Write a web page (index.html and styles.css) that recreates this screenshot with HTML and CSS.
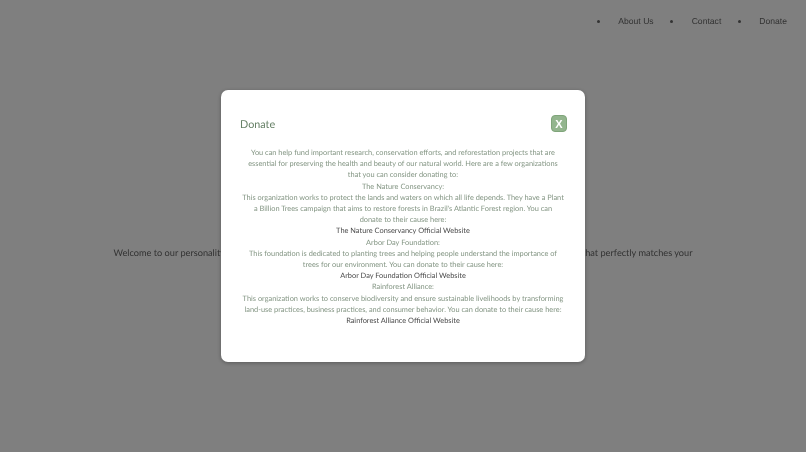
FILE: index.html
```html
<!DOCTYPE html>
<html lang="en">
<head>
  <meta charset="UTF-8" />
  <meta name="viewport" content="width=device-width, initial-scale=1.0"/>
  <title>Donate</title>
  <link rel="stylesheet" href="styles.css">
</head>
<body>
  <nav class="nav">
    <ul class="nav-list">
      <li><a href="#">About Us</a></li>
      <li><a href="#">Contact</a></li>
      <li><a href="#">Donate</a></li>
    </ul>
  </nav>

  <main class="intro">
    <p>Welcome to our personality quiz! Answer a few simple questions about yourself and we will find the one kind of tree that perfectly matches your personality.</p>
  </main>

  <!-- Donate modal -->
  <div class="overlay">
    <div class="modal">
      <div class="modal-head">
        <h2>Donate</h2>
        <button class="close-btn">X</button>
      </div>
      <div class="modal-body">
        <p>You can help fund important research, conservation efforts, and reforestation projects that are essential for preserving the health and beauty of our natural world. Here are a few organizations that you can consider donating to:</p>
        <p>The Nature Conservancy:</p>
        <p>This organization works to protect the lands and waters on which all life depends. They have a Plant a Billion Trees campaign that aims to restore forests in Brazil's Atlantic Forest region. You can donate to their cause here:</p>
        <p><a href="#">The Nature Conservancy Official Website</a></p>
        <p>Arbor Day Foundation:</p>
        <p>This foundation is dedicated to planting trees and helping people understand the importance of trees for our environment. You can donate to their cause here:</p>
        <p><a href="#">Arbor Day Foundation Official Website</a></p>
        <p>Rainforest Alliance:</p>
        <p>This organization works to conserve biodiversity and ensure sustainable livelihoods by transforming land-use practices, business practices, and consumer behavior. You can donate to their cause here:</p>
        <p><a href="#">Rainforest Alliance Official Website</a></p>
      </div>
    </div>
  </div>
</body>
</html>
```

FILE: styles.css
```css
body {
  margin: 0;
  height: 452px;
  overflow: hidden;
  background-color: #fff;
  color: #666;
  font-family: "Lato", sans-serif;
  text-rendering: geometricPrecision;
  display: flex;
  flex-direction: column;
  filter: blur(0.3px);
}

.nav {
  display: flex;
  justify-content: flex-end;
  padding: 15px 19px 0 0;
}

.nav-list {
  display: flex;
  gap: 16.5px;
  margin: 0;
  padding: 0;
  list-style: none;
  font-family: "Liberation Sans", sans-serif;
  font-size: 8.6px;
  line-height: 12px;
}

.nav-list li {
  display: flex;
  align-items: center;
}

.nav-list li::before {
  content: "";
  width: 3px;
  height: 3px;
  border-radius: 50%;
  background-color: #666;
  margin-right: 18.5px;
}

.nav-list a {
  color: #666;
  text-decoration: none;
}

.intro {
  flex: 1;
  padding: 0 105px;
  text-align: center;
  font-size: 9.2px;
}

.intro p {
  margin: 0;
  padding-top: 219px;
  line-height: 14px;
}

.overlay {
  position: fixed;
  inset: 0;
  background-color: rgba(0, 0, 0, 0.5);
  display: flex;
  align-items: center;
  justify-content: center;
}

.modal {
  width: 364px;
  height: 272px;
  box-sizing: border-box;
  padding: 25px 19px 0 19px;
  background-color: #fff;
  border-radius: 7px;
  box-shadow: 0 1px 4px rgba(0, 0, 0, 0.3);
}

.modal-head {
  display: flex;
  justify-content: space-between;
  align-items: center;
  margin-bottom: 15px;
}

.modal-head h2 {
  margin: 2px 0 0 0;
  font-size: 10.8px;
  font-weight: 400;
  color: #668066;
}

.close-btn {
  width: 16px;
  height: 17px;
  margin-right: -1px;
  padding: 0;
  border: 1px solid #7fa57a;
  border-radius: 4px;
  background-color: #93b58e;
  color: #fff;
  font-family: "Liberation Sans", sans-serif;
  font-size: 11px;
  font-weight: bold;
}

.modal-body {
  padding: 0 2.2px;
  text-align: center;
  font-size: 7.4px;
  line-height: 11.2px;
  color: #839583;
}

.modal-body p {
  margin: 0;
}

.modal-body a {
  color: #4a4a4a;
  text-decoration: none;
}
```
